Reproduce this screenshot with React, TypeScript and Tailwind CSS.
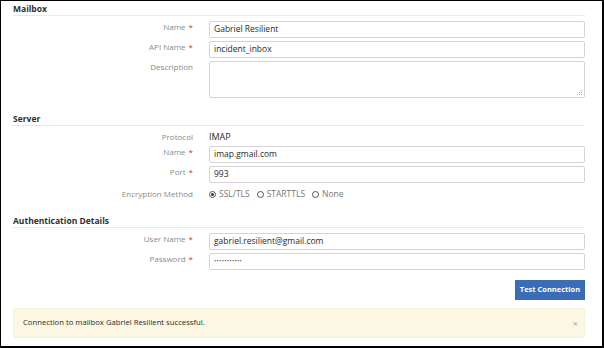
import React from "react";

const font = { fontFamily: '"Open Sans", "Noto Sans", sans-serif' };

function Heading({ children, className = "" }: { children: React.ReactNode; className?: string }) {
  return (
    <div className={"border-b border-[#e9e9e9] pb-[1px] text-[8.5px] font-bold leading-[10px] text-[#2f2f2f] " + className}>
      {children}
    </div>
  );
}

function Label({ text, req }: { text: string; req?: boolean }) {
  return (
    <div className="w-[180px] shrink-0 text-right text-[8px] leading-[12px] text-[#8a8a8a]">
      {text}
      {req && <span className="ml-[3px] text-[#c0392b]">*</span>}
    </div>
  );
}

function Row({ label, req, className = "", children }: { label: string; req?: boolean; className?: string; children: React.ReactNode }) {
  return (
    <div className={"flex items-start gap-[16px] " + className}>
      <Label text={label} req={req} />
      <div className="flex-1">{children}</div>
    </div>
  );
}

function Input({ value, pw }: { value: string; pw?: boolean }) {
  return (
    <div className="flex h-[17px] items-center rounded-[2px] border border-[#d4d4d4] bg-white pl-[4px] text-[8.5px] text-[#2a2a2a]">
      {pw ? <span className="text-[6px] tracking-[0.3px] text-[#555]">•••••••••••</span> : value}
    </div>
  );
}

function Radio({ checked, label }: { checked?: boolean; label: string }) {
  return (
    <div className="flex items-center gap-[3px]">
      <span className="flex h-[7px] w-[7px] items-center justify-center rounded-full border border-[#555]">
        {checked && <span className="h-[3px] w-[3px] rounded-full bg-[#333]" />}
      </span>
      <span>{label}</span>
    </div>
  );
}

export default function App() {
  return (
    <div
      style={font}
      className="box-border h-[348px] w-[604px] overflow-hidden border-b-2 border-l border-r-2 border-t border-black bg-white pl-[12px] pr-[17px]"
    >
      <Heading className="pt-[3px]">Mailbox</Heading>
      <Row label="Name" req className="mt-[5px]">
        <Input value="Gabriel Resilient" />
      </Row>
      <Row label="API Name" req className="mt-[3px]">
        <Input value="incident_inbox" />
      </Row>
      <Row label="Description" className="mt-[3px]">
        <div className="relative h-[37px] rounded-[2px] border border-[#d4d4d4] bg-white">
          <svg className="absolute bottom-[2px] right-[2px]" width="5" height="5" viewBox="0 0 5 5">
            <rect x="4" y="0" width="1" height="1" fill="#aaa" />
            <rect x="2" y="2" width="1" height="1" fill="#aaa" />
            <rect x="4" y="2" width="1" height="1" fill="#aaa" />
            <rect x="0" y="4" width="1" height="1" fill="#aaa" />
            <rect x="2" y="4" width="1" height="1" fill="#aaa" />
            <rect x="4" y="4" width="1" height="1" fill="#aaa" />
          </svg>
        </div>
      </Row>

      <Heading className="mt-[16px]">Server</Heading>
      <Row label="Protocol" className="mt-[5px]">
        <div className="text-[9px] leading-[12px] text-[#2a2a2a]">IMAP</div>
      </Row>
      <Row label="Name" req className="mt-[3px]">
        <Input value="imap.gmail.com" />
      </Row>
      <Row label="Port" req className="mt-[3px]">
        <Input value="993" />
      </Row>
      <Row label="Encryption Method" className="mt-[5px]">
        <div className="flex h-[12px] items-center gap-[7px] text-[8.5px] text-[#777]">
          <Radio checked label="SSL/TLS" />
          <Radio label="STARTTLS" />
          <Radio label="None" />
        </div>
      </Row>

      <Heading className="mt-[16px]">Authentication Details</Heading>
      <Row label="User Name" req className="mt-[5px]">
        <Input value="gabriel.resilient@gmail.com" />
      </Row>
      <Row label="Password" req className="mt-[3px]">
        <Input value="" pw />
      </Row>

      <div className="mt-[10px] flex justify-end">
        <button className="h-[20px] w-[70px] bg-[#3a6db5] text-[7.5px] font-bold text-white">Test Connection</button>
      </div>

      <div className="mt-[8px] flex h-[30px] items-center justify-between rounded-[2px] border border-[#f7f0d9] bg-[#fcf7e3] pl-[9px] pr-[6px] text-[7.7px] text-[#2a2a2a]">
        <span>Connection to mailbox Gabriel Resilient successful.</span>
        <span className="text-[9px] leading-none text-[#aaa]">×</span>
      </div>
    </div>
  );
}
